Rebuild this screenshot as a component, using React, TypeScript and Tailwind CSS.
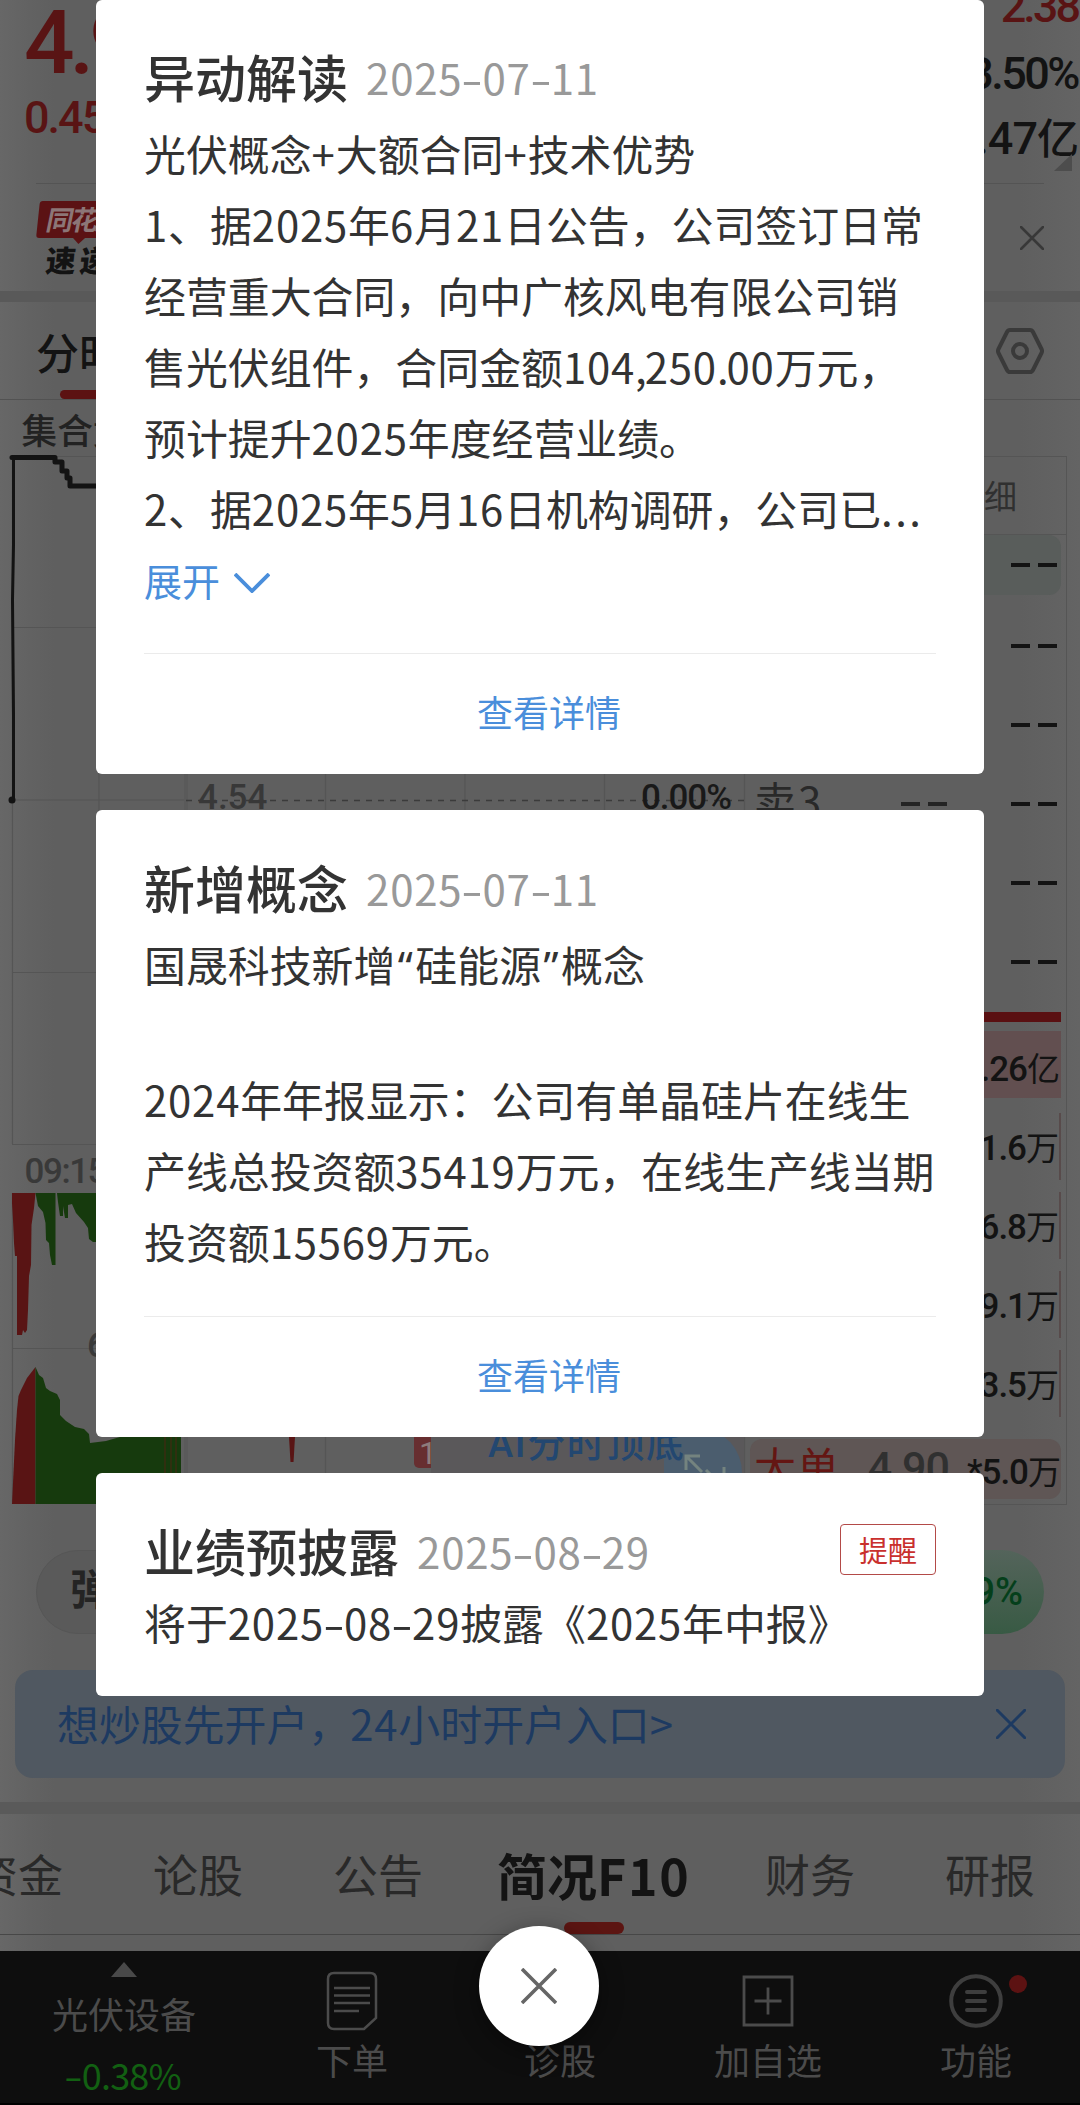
import React from "react";

/** Sets one line of mixed Chinese and Latin text, with the advance widths tuned per kind of glyph. */
function Mixed({ children }: { children: string }) {
  const parts = children.split(/(\d+|\.\.\.|[.,]|-|\+|[“”])/).filter(Boolean);
  return (
    <>
      {parts.map((p, i) => {
        if (/^\d+$/.test(p)) return <span key={i} className="tracking-[0.8px]">{p}</span>;
        if (p === "...") return <span key={i} className="tracking-[2.5px]">{p}</span>;
        if (/^[.,]$/.test(p)) return <span key={i} className="tracking-[-2px]">{p}</span>;
        if (p === "-")
          return <span key={i} className="inline-block w-[20px] scale-x-150 text-center">{p}</span>;
        if (p === "+") return <span key={i} className="tracking-[1px]">{p}</span>;
        if (/[“”]/.test(p))
          return (
            <span key={i} className="inline-block w-[20px] text-center font-['Noto_Sans',sans-serif]">{p}</span>
          );
        return <span key={i}>{p}</span>;
      })}
    </>
  );
}

function Cross({ className, width = 2 }: { className: string; width?: number }) {
  return (
    <svg viewBox="0 0 24 24" className={className} fill="none" stroke="currentColor" strokeWidth={width} strokeLinecap="round">
      <path d="M1 1L23 23M23 1L1 23" />
    </svg>
  );
}

function CardTitle({ title, date }: { title: string; date: string }) {
  return (
    <div className="flex h-[71px] items-center whitespace-nowrap">
      <h2 className="text-[51px] leading-[71px] font-medium">{title}</h2>
      <span className="ml-[18px] text-[42px] leading-[71px] text-[#999]">
        <Mixed>{date}</Mixed>
      </span>
    </div>
  );
}

function Lines({ lines }: { lines: string[] }) {
  return (
    <div>
      {lines.map((l, i) => (
        <p key={i} className="h-[71px] text-[41.9px] leading-[71px] whitespace-nowrap">
          <Mixed>{l}</Mixed>
        </p>
      ))}
    </div>
  );
}

function Detail() {
  return (
    <div className="border-t border-[#ebebeb]">
      <button className="block h-[115px] w-full pl-[18px] text-center text-[36px] leading-[115px] text-[#4a8edb]">查看详情</button>
    </div>
  );
}

function Chart() {
  return (
    <svg viewBox="0 400 750 1150" className="h-[1150px] w-[750px] shrink-0">
      <g stroke="#555555" strokeWidth="1.2" fill="none">
        <path d="M12 456.5H744M12 627.5H744M12 800H186M12 972.5H744M12 1144.5H744M12 1348.5H744" />
        <path d="M12.5 457V1144M12.5 1193V1504M99 457V1144M325.5 457V1504M465 457V1504M604.5 457V1504M744.5 457V1504" />
      </g>
      <path d="M186 457V1504" stroke="#5a5a5a" strokeWidth="4" />
      <text x="21.5" y="444" fontSize="35.7" fontWeight="500" fill="#222222">集合竞价</text>
      <path d="M13.5 457L13.5 545L12.5 600L13.5 715V799" stroke="#131313" strokeWidth="3" fill="none" />
      <circle cx="12" cy="800" r="3.5" fill="#131313" />
      <path d="M12 457.5H55V462H62V471H67V478H70V486H100" stroke="#131313" strokeWidth="5" fill="none" strokeLinecap="round" strokeLinejoin="round" />
      <path d="M186 800.5H744" stroke="#3b3b3b" strokeWidth="1.6" strokeDasharray="6 6" />
      <text x="198" y="809" fontSize="35" fontWeight="500" fill="#383838" className="font-[Roboto,sans-serif]">4.54</text>
      <text x="641" y="809" fontSize="35" fontWeight="500" fill="#191919" textLength="91" className="font-[Roboto,sans-serif]">0.00%</text>
      <text x="24.5" y="1183" fontSize="35" fontWeight="500" fill="#393939" textLength="83" className="font-[Roboto,sans-serif]">09:15</text>
      <text x="87" y="1357" fontSize="35" fontWeight="500" fill="#393939" className="font-[Roboto,sans-serif]">6</text>

      {/* upper volume pane */}
      <path d="M12 1193V1203L13 1220L14 1243L15 1256H17V1335L22 1335L23 1330L25 1333L27 1330L28 1310L29 1276L31 1265L31.5 1225L34 1208L35.5 1193Z" fill="#591414" />
      <path d="M35.5 1193L38 1206L43 1212L45.500 1223L46 1240L49 1243L50 1255L52 1265H55.500V1193ZM57 1193L58 1202L60 1216H63V1206L65 1218H68V1205L72 1204L76 1213L84 1222L88 1228L89 1239L93 1242H100V1193Z" fill="#163a0d" />
      {/* lower volume pane */}
      <path d="M12 1504L15 1440L17 1410L18.500 1396L21 1390L27 1378L35.500 1367V1504Z" fill="#591414" />
      <path d="M35.500 1367L39 1375L43 1378L46 1388L50 1391L57 1394L60 1400V1415L66 1421L75 1427L84 1429L89 1434L90 1443L106 1441L120 1437H181V1504H35.500Z" fill="#163a0d" />
      <path d="M165 1437V1504M171 1437V1504M176 1437V1504" stroke="#3a2c10" strokeWidth="1.500" />
      <path d="M289 1437H295L293.500 1462H290.500Z" fill="#591414" />

      <rect x="414" y="1420" width="30" height="48" rx="5" fill="#672e30" />
      <text x="419" y="1464" fontSize="32" fill="#8d7c7c" className="font-[Roboto,sans-serif]">1</text>
      <rect x="431" y="1400" width="313" height="104" fill="#5a585a" />
      <path d="M664 1430H703A39 43 0 0 1 742 1473V1500H664Z" fill="#4b5d6e" />
      <text x="488" y="1457" fontSize="38" fontWeight="500" fill="#234770" textLength="196" className="font-[Roboto,'Noto_Sans_CJK_SC',sans-serif]">AI分时顶底</text>
      <path d="M702 1472L687 1457M686 1470V1456H700" stroke="#74837f" strokeWidth="3" fill="none" />
      <path d="M706 1470L714 1478M724 1467V1480" stroke="#74837f" strokeWidth="3" fill="none" />
    </svg>
  );
}

const TRADES = ["1.6万", "6.8万", "9.1万", "3.5万"];

function Dashes({ className }: { className: string }) {
  return (
    <span className={`flex gap-[8px] ${className}`}>
      <i className="h-[4px] w-[19px] bg-current" />
      <i className="h-[4px] w-[19px] bg-current" />
    </span>
  );
}

function OrderPanel() {
  return (
    <div className="mt-[56px] h-[1049px] w-[317px] shrink-0 border-t border-r border-b border-[#555] text-[#131313]">
      <div className="flex h-[78px] items-center justify-end border-b border-[#555] pr-[49px] text-[33px] text-[#303030]">明细</div>
      <div className="mr-[5px] flex h-[60px] items-center justify-end rounded-r-xl bg-[#595d5b] pr-[4px]">
        <Dashes className="" />
      </div>
      <div className="mt-[11px]">
        {["", "", "卖3", "", ""].map((label, i) => (
          <div key={i} className="flex h-[79px] items-center pr-[9px] pl-[4px]">
            <span className="-mt-[9px] text-[42px] tracking-[2px] text-[#292929]">{label}</span>
            {label ? <Dashes className="ml-auto text-[#242424]" /> : null}
            <Dashes className={label ? "ml-[64px]" : "ml-auto"} />
          </div>
        ))}
      </div>
      <div className="mt-[11px] mr-[5px] h-[10px] bg-[#5a1012]" />
      <div className="mt-[9px] mr-[5px] flex h-[67px] items-center justify-end bg-[#624f50] pt-[10px] pr-[1px]">
        <Amount text="1.26亿" />
      </div>
      <div className="mt-[9px] mr-[5px]">
        {TRADES.map((t) => (
          <div key={t} className="flex h-[79px] items-center justify-end">
            <span className="pt-[4px]"><Amount text={t} /></span>
            <i className="h-[67px] w-[2px] bg-[#584b4b]" />
          </div>
        ))}
      </div>
      <div className="mt-[16px] mr-[5px] flex h-[60px] items-center rounded-xl bg-[#5f5655] pl-[4px]">
        <span className="-mt-[9px] text-[42px] tracking-[1px] text-[#641613]">大单</span>
        <span className="ml-auto -mt-[3px] font-[Roboto,sans-serif] text-[43px] font-medium tracking-[-1px] text-[#303030]">4.90</span>
        <span className="ml-[18px] pt-[8px]"><Amount text="*5.0万" /></span>
      </div>
    </div>
  );
}

function Amount({ text }: { text: string }) {
  return (
    <span className="text-[33px] whitespace-nowrap">
      <span className="font-[Roboto,sans-serif] text-[35px] font-medium tracking-[-1px]">{text.slice(0, -1)}</span>
      {text.slice(-1)}
    </span>
  );
}

function StockPage() {
  return (
    <div className="flex h-[2105px] w-[1080px] flex-col overflow-hidden bg-[linear-gradient(90deg,#676767_0px,#626262_30px,#5f5f5f_55px,#5f5f5f_1020px,#646464_1080px)]">
      <header className="mx-[36px] flex h-[184px] shrink-0 justify-between border-b border-[#545454] font-[Roboto,'Noto_Sans_CJK_SC',sans-serif] font-medium">
        <div className="-ml-[12px] text-[#591414]">
          <div className="h-[92px] text-[89px] leading-[86px] tracking-[-5px]">4.99</div>
          <div className="text-[45px] leading-[52px] tracking-[-2px]">0.45</div>
        </div>
        <div className="relative -mr-[34px] text-right text-[45px] text-[#131313]">
          <div className="-mt-[18px] h-[48px] leading-[49px] tracking-[-3px] text-[#591414]">2.38</div>
          <div className="h-[86px] leading-[88px] tracking-[-2.5px]">3.50%</div>
          <div className="h-[46px] leading-[46px] tracking-[-1px]">9.47<span className="text-[42px]">亿</span></div>
          <i className="absolute right-[6px] bottom-[12px] h-[17px] w-[18px] bg-[#4d4d4d] [clip-path:polygon(100%_0,100%_100%,0_100%)]" />
        </div>
      </header>

      <div className="flex h-[107px] shrink-0 items-center justify-between px-[36px]">
        <div className="mt-[-2px] h-[72px] w-[140px]">
          <div className="relative ml-[2px] flex h-[37px] w-[100px] -skew-x-6 items-center rounded-[3px] bg-[#5b1214] pl-[9px] text-[27px] font-bold tracking-[-2px] text-[#8c7677]">
            <span className="-skew-x-6">同花顺</span>
            <i className="absolute top-[36px] left-[36px] h-[7px] w-[14px] bg-[#5b1214] [clip-path:polygon(0_0,100%_0,50%_100%)]" />
          </div>
          <div className="mt-[4px] ml-[10px] -skew-x-6 text-[30px] leading-[34px] font-black tracking-[4px] text-[#131313]">速递</div>
        </div>
        <Cross className="h-[24px] w-[24px] text-[#383838]" width={2.6} />
      </div>
      <div className="h-[11px] shrink-0 bg-[#595959]" />

      <nav className="flex h-[98px] shrink-0 items-center justify-between border-b border-[#525252] px-[36px]">
        <div className="flex flex-col items-center">
          <span className="mt-[19px] text-[43px] leading-[60px] font-medium text-[#131313]">分时</span>
          <i className="mt-[9px] mb-[1px] h-[9px] w-[44px] translate-x-[3px] rounded-full bg-[#5c1212]" />
        </div>
        <svg viewBox="0 0 48 46" className="h-[46px] w-[48px]" fill="none" stroke="#3a3a3a" strokeWidth="4" strokeLinejoin="round">
          <path d="M14 2H34Q36 2 37 4L45.500 21Q46.500 23 45.500 25L37 42Q36 44 34 44H14Q12 44 11 42L2.500 25Q1.500 23 2.500 21L11 4Q12 2 14 2Z" />
          <circle cx="24" cy="23" r="7" />
        </svg>
      </nav>

      <div className="flex h-[1150px] shrink-0">
        <Chart />
        <OrderPanel />
      </div>

      <div className="flex h-[84px] shrink-0 justify-between px-[36px]">
        <div className="flex w-[260px] items-center rounded-full border border-[#565656] bg-[#5a5a5a] pb-[12px] pl-[33px] text-[42px] font-bold text-[#242424]">弹</div>
        <div className="flex w-[260px] items-center justify-end rounded-full bg-linear-to-b from-[#54645b] to-[#385a44] pr-[21px] font-[Roboto,sans-serif] text-[38px] font-medium text-[#053f1b]">0.19%</div>
      </div>

      <div className="mx-[15px] mt-[36px] flex h-[108px] shrink-0 items-center justify-between rounded-[18px] bg-[#505861] pr-[39px] pl-[42px] text-[41.9px] text-[#1d3a61]">
        <span className="-mt-[2px]"><Mixed>{"想炒股先开户，24小时开户入口>"}</Mixed></span>
        <Cross className="h-[30px] w-[30px]" width={2.4} />
      </div>
      <div className="mt-[24px] h-[12px] shrink-0 bg-[#5a5a5a]" />

      <nav className="flex h-[121px] shrink-0 border-b-[1.500px] border-[#474747] text-[45px] leading-[120px] whitespace-nowrap text-[#292929]">
        <span className="-ml-[27px] w-[180px] shrink-0">资金</span>
        <span className="w-[180px] shrink-0">论股</span>
        <span className="w-[164px] shrink-0">公告</span>
        <span className="relative w-[268px] shrink-0 text-[50px] font-bold text-[#131313]">
          简况<span className="tracking-[1.8px]">F10</span>
          <i className="absolute bottom-0 left-[67px] h-[12px] w-[60px] rounded-full bg-[#5c1512]" />
        </span>
        <span className="w-[180px] shrink-0">财务</span>
        <span className="shrink-0">研报</span>
      </nav>
      <div className="h-[16px] shrink-0" />

      <footer className="flex h-[154px] shrink-0 border-b-2 border-black bg-[#0e0e0e] text-[36px] leading-[46px] text-[#4b4b4b]">
        <div className="flex w-[248px] flex-col items-center">
          <i className="mt-[11px] h-[15px] w-[26px] bg-[#494949] [clip-path:polygon(50%_0,100%_100%,0_100%)]" />
          <span className="mt-[13px]">光伏设备</span>
          <span className="mt-[15px] text-[36px] tracking-[-0.8px] text-[#126012]">
            <span className="mr-[3px] inline-block scale-x-150">-</span>0.38%
          </span>
        </div>
        <NavItem label="下单">
          <svg viewBox="0 0 52 60" className="h-[60px] w-[52px]" fill="none" stroke="#4b4b4b" strokeWidth="2.500">
            <path d="M8 2H44Q50 2 50 8V47L38 58H8Q2 58 2 52V8Q2 2 8 2Z" />
            <path d="M8 17H44M8 24.500H44M8 32H44M8 40H33" />
          </svg>
        </NavItem>
        <NavItem label="诊股"><span /></NavItem>
        <NavItem label="加自选">
          <svg viewBox="0 0 52 52" className="h-[52px] w-[52px]" fill="none" stroke="#4b4b4b" strokeWidth="2.800">
            <path d="M2 2H50V50H2ZM12.500 26H39.500M26 12.500V39.500" />
          </svg>
        </NavItem>
        <NavItem label="功能">
          <svg viewBox="0 0 54 54" className="h-[54px] w-[54px]" fill="none" stroke="#3e3e3e" strokeWidth="4" strokeLinecap="round">
            <circle cx="27" cy="27" r="24.800" />
            <path d="M18 18H36M18 27H36M18 36H36" />
          </svg>
          <i className="absolute top-[24px] left-[137px] h-[18px] w-[18px] rounded-full bg-[#5c1212]" />
        </NavItem>
      </footer>
    </div>
  );
}

function NavItem({ label, children }: { label: string; children: React.ReactNode }) {
  return (
    <div className="relative flex w-[208px] flex-col items-center">
      <div className="mt-[20px] flex h-[60px] items-center">{children}</div>
      <span className="mt-[5px]">{label}</span>
    </div>
  );
}

export default function App() {
  return (
    <div className="relative h-[2105px] w-[1080px] overflow-hidden font-['Noto_Sans_CJK_SC',sans-serif]" lang="zh-CN">
      <StockPage />

      <main className="absolute inset-0 flex flex-col gap-[36px] px-[96px] text-[#333]">
        <section className="h-[774px] rounded-[6px] bg-white px-[48px] pt-[41px]">
          <CardTitle title="异动解读" date="2025-07-11" />
          <div className="mt-[5px]">
            <Lines
              lines={[
                "光伏概念+大额合同+技术优势",
                "1、据2025年6月21日公告，公司签订日常",
                "经营重大合同，向中广核风电有限公司销",
                "售光伏组件，合同金额104,250.00万元，",
                "预计提升2025年度经营业绩。",
                "2、据2025年5月16日机构调研，公司已...",
              ]}
            />
          </div>
          <div className="mb-[34px] flex h-[76px] items-center text-[38px] leading-[73px] text-[#4a8edb]">
            <span className="-mt-[3px]">展开</span>
            <svg viewBox="0 0 36 20" className="mt-[4px] ml-[14px] h-[20px] w-[36px]" fill="none" stroke="currentColor" strokeWidth="3.800">
              <path d="M1 1L18 18L35 1" />
            </svg>
          </div>
          <Detail />
        </section>

        <section className="h-[627px] rounded-[6px] bg-white px-[48px] pt-[42px]">
          <CardTitle title="新增概念" date="2025-07-11" />
          <div className="mt-[5px] mb-[64px]">
            <Lines lines={["国晟科技新增“硅能源”概念"]} />
          </div>
          <div className="mb-[40px]">
            <Lines lines={["2024年年报显示：公司有单晶硅片在线生", "产线总投资额35419万元，在线生产线当期", "投资额15569万元。"]} />
          </div>
          <Detail />
        </section>

        <section className="h-[223px] rounded-[6px] bg-white px-[48px] pt-[42px]">
          <div className="flex items-center justify-between">
            <CardTitle title="业绩预披露" date="2025-08-29" />
            <button className="-mt-[2px] h-[51px] w-[96px] rounded-[4px] border-[1.500px] border-[#b34a48] text-[29px] leading-[47px] text-[#c9302d]">提醒</button>
          </div>
          <Lines lines={["将于2025-08-29披露《2025年中报》"]} />
        </section>
      </main>

      <button className="absolute top-[1926px] left-[479px] flex h-[120px] w-[120px] items-center justify-center rounded-full bg-white shadow-[0_6px_24px_rgba(0,0,0,0.4)]">
        <svg viewBox="0 0 36 36" className="h-[36px] w-[36px]" stroke="#666" strokeWidth="3.600">
          <path d="M1 1L35 35M35 1L1 35" />
        </svg>
      </button>
    </div>
  );
}
